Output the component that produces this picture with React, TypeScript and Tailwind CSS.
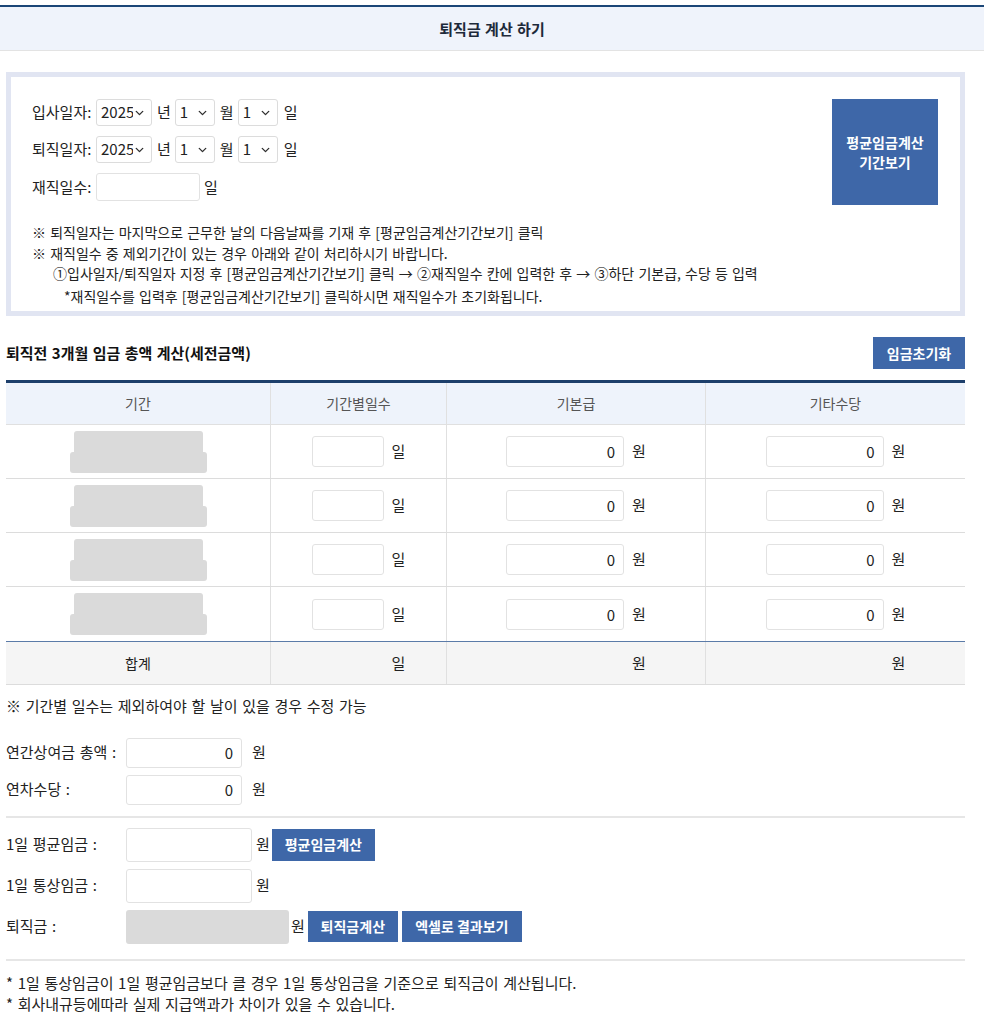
import { ChevronDown } from "lucide-react";

const FONT = "font-['Noto_Sans_CJK_KR','Noto_Sans',sans-serif]";

function DateSelect({ value, width }: { value: string; width: string }) {
  return (
    <div className={`relative h-[27px] ${width} rounded-[3px] border border-[#dcdcdc] bg-white`}>
      <select
        defaultValue={value}
        className="h-full w-full appearance-none bg-transparent pl-[4px] pr-[18px] text-[15px] text-[#222] outline-none"
      >
        <option value={value}>{value}</option>
      </select>
      <ChevronDown
        className="pointer-events-none absolute right-[5px] top-1/2 h-[13px] w-[13px] -translate-y-1/2 text-[#333]"
        strokeWidth={2.5}
      />
    </div>
  );
}

function DateRow({ label }: { label: string }) {
  return (
    <div className="flex h-[27px] items-center">
      <span className="w-[64px]">{label}</span>
      <DateSelect value="2025" width="w-[56px]" />
      <span className="ml-[5px] mr-[4px]">년</span>
      <DateSelect value="1" width="w-[40px]" />
      <span className="ml-[5px] mr-[4px]">월</span>
      <DateSelect value="1" width="w-[40px]" />
      <span className="ml-[6px]">일</span>
    </div>
  );
}

function Blue({ children, className }: { children: React.ReactNode; className: string }) {
  return (
    <button className={`bg-[#3e67a8] font-bold text-white ${className}`}>{children}</button>
  );
}

function NumInput({ width, height = "h-[31px]", value = "" }: { width: string; height?: string; value?: string }) {
  return (
    <input
      readOnly
      value={value}
      className={`${width} ${height} rounded-[3px] border border-[#e2e2e2] bg-white px-[8px] text-right text-[15px] text-[#222] outline-none`}
    />
  );
}

const rows = [0, 1, 2, 3];

export default function App() {
  return (
    <div className={`${FONT} min-h-[1024px] bg-white text-[14px] text-[#222] [word-spacing:1px]`}>
      <div className="h-[5px]" />
      <div className="flex h-[46px] items-center justify-center border-t-2 border-b border-t-[#1b4677] border-b-[#e3e3e3] bg-[#eff3fb] pt-[2px] text-[15px] font-bold text-[#1e2a3a]">
        퇴직금 계산 하기
      </div>

      <div className="ml-[6px] w-[959px]">
        {/* 기간 입력 박스 */}
        <div className="mt-[21px] flex h-[244px] justify-between border-[5px] border-[#e1e5f2] pl-[21px] pr-[22px] pt-[22px]">
          <div>
            <div className="flex flex-col gap-[10px] text-[15px]">
              <DateRow label="입사일자:" />
              <DateRow label="퇴직일자:" />
              <div className="flex h-[28px] items-center">
                <span className="w-[64px]">재직일수:</span>
                <NumInput width="w-[104px]" height="h-[28px]" />
                <span className="ml-[4px]">일</span>
              </div>
            </div>
            <div className="mt-[21px] leading-[20.5px]">
              <p>※ 퇴직일자는 마지막으로 근무한 날의 다음날짜를 기재 후 [평균임금계산기간보기] 클릭</p>
              <p>※ 재직일수 중 제외기간이 있는 경우 아래와 같이 처리하시기 바랍니다.</p>
              <p className="pl-[21px]">
                ①입사일자/퇴직일자 지정 후 [평균임금계산기간보기] 클릭 → ②재직일수 칸에 입력한 후 → ③하단 기본급, 수당 등 입력
              </p>
              <p className="pl-[32px] pt-[2px]">*재직일수를 입력후 [평균임금계산기간보기] 클릭하시면 재직일수가 초기화됩니다.</p>
            </div>
          </div>
          <Blue className="h-[106px] w-[106px] shrink-0 text-[14px] leading-[20px]">
            평균임금계산
            <br />
            기간보기
          </Blue>
        </div>

        {/* 3개월 임금 */}
        <div className="mt-[21px] flex items-center justify-between">
          <h2 className="text-[15px] font-bold text-[#111]">퇴직전 3개월 임금 총액 계산(세전금액)</h2>
          <Blue className="h-[32px] w-[92px] text-[14px]">임금초기화</Blue>
        </div>

        <div className="mt-[11px] border-t-[3px] border-[#1d3f6b]">
          <div className="grid h-[42px] grid-cols-[265px_176px_259px_259px] border-b border-[#e0e0e0] bg-[#eef3fb] text-[#555]">
            {["기간", "기간별일수", "기본급", "기타수당"].map((h, i) => (
              <div key={h} className={`flex items-center justify-center ${i < 3 ? "border-r border-[#e0e0e0]" : ""}`}>
                {h}
              </div>
            ))}
          </div>
          {rows.map((r) => (
            <div
              key={r}
              className={`grid h-[54px] grid-cols-[265px_176px_259px_259px] text-[15px] ${r < 3 ? "border-b border-[#dcdcdc]" : ""}`}
            >
              <div className="flex flex-col items-center justify-center border-r border-[#e0e0e0]">
                <div className="h-[21px] w-[129px] rounded-t-[3px] bg-[#dadada]" />
                <div className="h-[21px] w-[137px] rounded-[3px] bg-[#dadada]" />
              </div>
              <div className="flex items-center justify-center gap-[8px] border-r border-[#e0e0e0]">
                <NumInput width="w-[72px]" />
                <span>일</span>
              </div>
              <div className="flex items-center justify-center gap-[8px] border-r border-[#e0e0e0]">
                <NumInput width="w-[118px]" value="0" />
                <span>원</span>
              </div>
              <div className="flex items-center justify-center gap-[8px]">
                <NumInput width="w-[118px]" value="0" />
                <span>원</span>
              </div>
            </div>
          ))}
          <div className="grid h-[44px] grid-cols-[265px_176px_259px_259px] border-t border-b border-t-[#5b7ba8] border-b-[#dcdcdc] bg-[#f5f5f5] text-[15px]">
            <div className="flex items-center justify-center border-r border-[#e0e0e0] text-[14px]">합계</div>
            <div className="flex items-center justify-center gap-[8px] border-r border-[#e0e0e0]">
              <span className="w-[72px]" />
              <span>일</span>
            </div>
            <div className="flex items-center justify-center gap-[8px] border-r border-[#e0e0e0]">
              <span className="w-[118px]" />
              <span>원</span>
            </div>
            <div className="flex items-center justify-center gap-[8px]">
              <span className="w-[118px]" />
              <span>원</span>
            </div>
          </div>
        </div>

        <div className="text-[15px] [word-spacing:1.3px]">
          <p className="mt-[10px]">※ 기간별 일수는 제외하여야 할 날이 있을 경우 수정 가능</p>

          <div className="mt-[20px] flex flex-col gap-[7px]">
            <div className="flex items-center">
              <span className="w-[120px]">연간상여금 총액 :</span>
              <NumInput width="w-[116px]" height="h-[30px]" value="0" />
              <span className="ml-[10px]">원</span>
            </div>
            <div className="flex items-center">
              <span className="w-[120px]">연차수당 :</span>
              <NumInput width="w-[116px]" height="h-[30px]" value="0" />
              <span className="ml-[10px]">원</span>
            </div>
          </div>

          <div className="mt-[11px] border-t-2 border-[#e6e6e6]" />

          <div className="mt-[10px] flex flex-col gap-[7px]">
            <div className="flex items-center">
              <span className="w-[120px]">1일 평균임금 :</span>
              <NumInput width="w-[126px]" height="h-[34px]" />
              <span className="ml-[4px]">원</span>
              <Blue className="ml-[2px] h-[32px] w-[103px] text-[14px] [word-spacing:0px]">평균임금계산</Blue>
            </div>
            <div className="flex items-center">
              <span className="w-[120px]">1일 통상임금 :</span>
              <NumInput width="w-[126px]" height="h-[34px]" />
              <span className="ml-[4px]">원</span>
            </div>
            <div className="flex items-center">
              <span className="w-[120px]">퇴직금 :</span>
              <div className="h-[34px] w-[163px] rounded-[3px] bg-[#dadada]" />
              <span className="ml-[2px]">원</span>
              <Blue className="ml-[3px] h-[31px] w-[90px] text-[14px]">퇴직금계산</Blue>
              <Blue className="ml-[4px] h-[31px] w-[120px] text-[14px] [word-spacing:0px]">엑셀로 결과보기</Blue>
            </div>
          </div>

          <div className="mt-[15px] border-t-2 border-[#e6e6e6]" />

          <div className="mt-[11px] leading-[21px]">
            <p>* 1일 통상임금이 1일 평균임금보다 클 경우 1일 통상임금을 기준으로 퇴직금이 계산됩니다.</p>
            <p>* 회사내규등에따라 실제 지급액과가 차이가 있을 수 있습니다.</p>
          </div>
        </div>
      </div>
    </div>
  );
}
